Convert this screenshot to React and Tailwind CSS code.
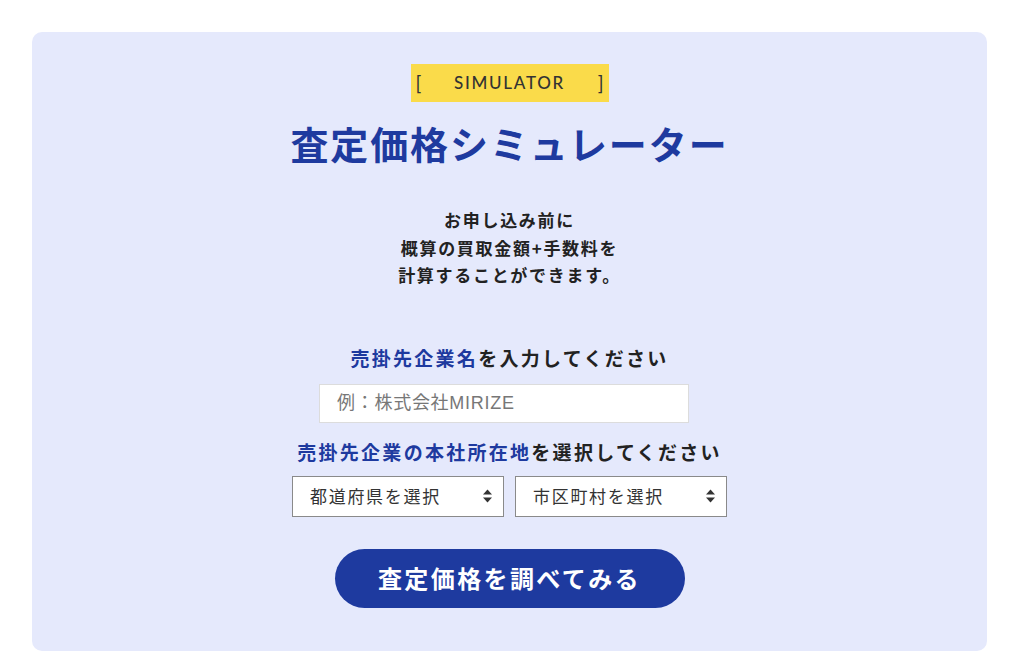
import { useState } from "react";

const jp = { fontFamily: '"Noto Sans CJK JP", "Noto Sans", sans-serif' };

function UpDown() {
    return (
        <svg width="11" height="16" viewBox="0 0 11 16" className="pointer-events-none absolute right-[11px] top-1/2 -translate-y-1/2">
            <path d="M5.5 1.5 L10 6.5 H1 Z" fill="#333" />
            <path d="M5.5 14.5 L10 9.5 H1 Z" fill="#333" />
        </svg>
    );
}

function Select({ label, value, onChange }) {
    return (
        <div className="relative w-[212px] h-[41px]">
            <select
                value={value}
                onChange={(e) => onChange(e.target.value)}
                className="appearance-none w-full h-full bg-white border border-[#8a8a8a] pl-[17px] text-[17px] tracking-[0.1em] text-[#333] outline-none"
                style={jp}
            >
                <option value="">{label}</option>
            </select>
            <UpDown />
        </div>
    );
}

export default function App() {
    const [company, setCompany] = useState("");
    const [pref, setPref] = useState("");
    const [city, setCity] = useState("");

    return (
        <div className="min-h-[671px] bg-white pt-[32px] px-[32px] pb-[20px]" style={jp}>
            <div className="w-[955px] bg-[#e5e9fc] rounded-[10px] pt-[32px] pb-[43px] flex flex-col items-center">
                <div className="w-[198px] h-[38px] bg-[#fadb4a] flex items-center justify-between px-[5px] text-[#333]" style={{ fontFamily: "Lato, sans-serif" }}>
                    <span className="text-[19px]">[</span>
                    <span className="text-[17px] font-medium tracking-[0.1em]">SIMULATOR</span>
                    <span className="text-[19px]">]</span>
                </div>

                <h1 className="mt-[18px] text-[38px] leading-[46px] font-bold text-[#1e3a9f] tracking-[0.05em]">
                    査定価格シミュレーター
                </h1>

                <p className="mt-[40px] text-[17px] leading-[27.5px] font-bold text-[#222] text-center tracking-[0.1em]">
                    お申し込み前に<br />
                    概算の買取金額+手数料を<br />
                    計算することができます。
                </p>

                <h2 className="mt-[55px] text-[19px] leading-[28px] font-bold text-[#222] tracking-[0.12em]">
                    <span className="text-[#1e3a9f]">売掛先企業名</span>を入力してください
                </h2>
                <input
                    value={company}
                    onChange={(e) => setCompany(e.target.value)}
                    placeholder="例：株式会社MIRIZE"
                    className="mt-[12px] mr-[11px] w-[370px] h-[39px] bg-white border border-[#dcdcdc] pl-[17px] text-[18px] tracking-[0.04em] text-[#333] placeholder:text-[#777] outline-none"
                    style={{ fontFamily: '"Liberation Sans", "Noto Sans CJK JP", sans-serif' }}
                />

                <h2 className="mt-[15px] text-[19px] leading-[28px] font-bold text-[#222] tracking-[0.12em]">
                    <span className="text-[#1e3a9f]">売掛先企業の本社所在地</span>を選択してください
                </h2>
                <div className="mt-[10px] flex gap-[11px]">
                    <Select label="都道府県を選択" value={pref} onChange={setPref} />
                    <Select label="市区町村を選択" value={city} onChange={setCity} />
                </div>

                <button className="mt-[32px] w-[350px] h-[59px] rounded-full bg-[#1e3a9f] text-white text-[24px] font-bold tracking-[0.1em]">
                    査定価格を調べてみる
                </button>
            </div>
        </div>
    );
}
